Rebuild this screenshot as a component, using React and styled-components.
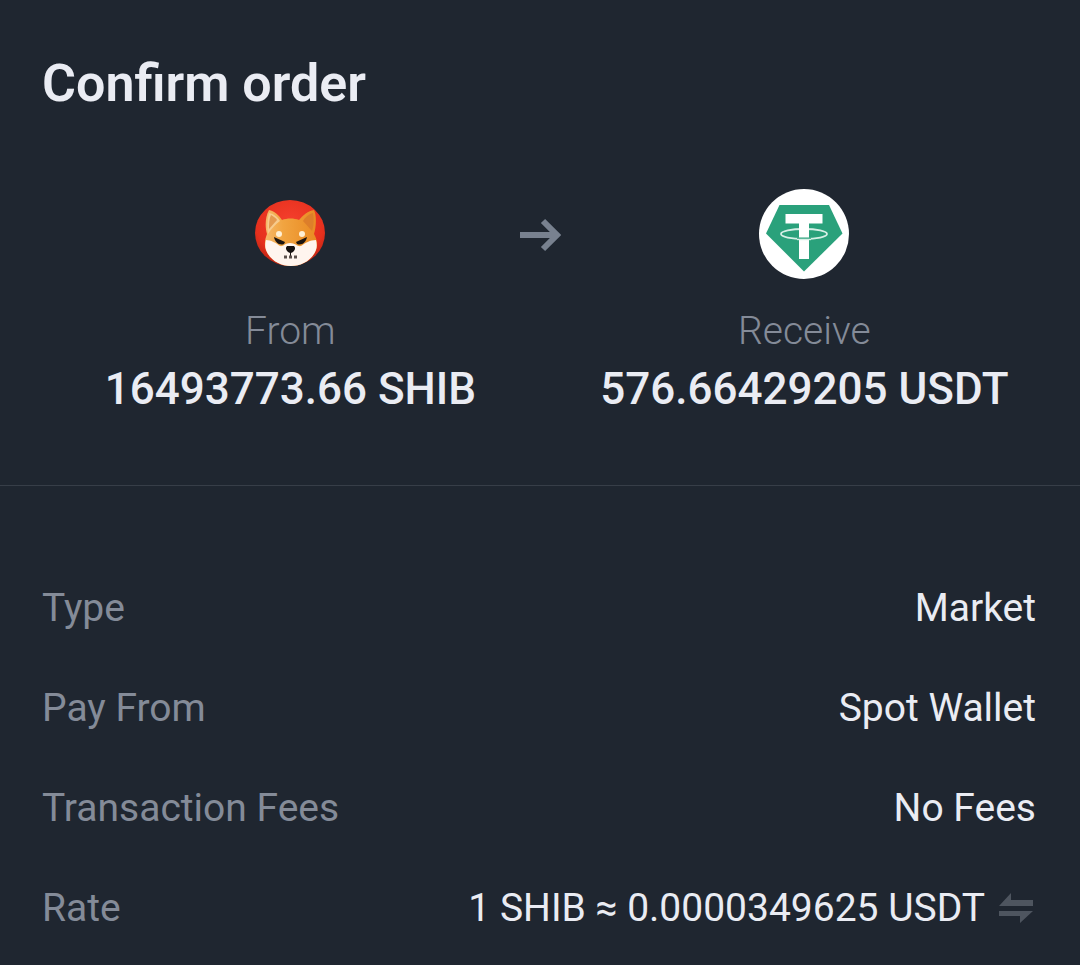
import styled, { ThemeProvider, createGlobalStyle } from 'styled-components';

const theme = {
	colors: {
		background: '#1f2630',
		line: '#373e48',
		text: '#eaecf3',
		muted: '#848b98',
		arrow: '#78818f',
		swap: '#4e555f',
	},
	fontSize: {
		medium: '39px',
		large: '44px',
		xlarge: '52px',
	},
}

const GlobalStyle = createGlobalStyle`
	* {
		box-sizing: border-box;
	}

	body {
		background: ${ props => props.theme.colors.background };
		color: ${ props => props.theme.colors.text };
		font-family: Roboto, 'Open Sans', sans-serif;
		margin: 0;
	}
`

const Title = styled.h1`
	font-size: ${ props => props.theme.fontSize.xlarge };
	font-weight: 600;
	line-height: 64px;
	margin: 0;
	padding: 52px 42px 0;
`

const Summary = styled.section`
	border-bottom: 1px solid ${ props => props.theme.colors.line };
	display: grid;
	grid-template-columns: 15fr 42px 16fr;
	padding: 68px 32px 66px 62px;
`

const Coin = styled.div`
	align-items: center;
	display: flex;
	flex-direction: column;
	white-space: nowrap;
`

const CoinIcon = styled.div`
	align-items: center;
	display: flex;
	height: 100px;
	justify-content: center;

	svg {
		display: block;
	}
`

const CoinLabel = styled.span`
	color: ${ props => props.theme.colors.muted };
	font-size: ${ props => props.theme.fontSize.medium };
	font-weight: 300;
	line-height: 56px;
	margin-top: 19px;
`

const CoinAmount = styled.strong`
	font-size: ${ props => props.theme.fontSize.large };
	font-weight: 500;
	line-height: 60px;
`

const ArrowCell = styled.div`
	align-items: center;
	display: flex;
	height: 100px;
	justify-content: center;
`

const Details = styled.dl`
	margin: 0;
	padding: 72px 44px 0 42px;
`

const Row = styled.div`
	align-items: center;
	display: flex;
	font-size: ${ props => props.theme.fontSize.medium };
	height: 100px;
	justify-content: space-between;
	white-space: nowrap;
`

const RowLabel = styled.dt`
	color: ${ props => props.theme.colors.muted };
`

const RowValue = styled.dd`
	align-items: center;
	display: flex;
	gap: 14px;
	margin: 0;
`

const SwapButton = styled.button`
	background: none;
	border: none;
	color: ${ props => props.theme.colors.swap };
	cursor: pointer;
	display: flex;
	margin: 0;
	padding: 0;
`

const ShibIcon = () => (
	<svg width="72" height="72" viewBox="0 0 72 72" aria-hidden="true">
		<defs>
			<radialGradient id="shibDisc" cx="50%" cy="35%" r="65%">
				<stop offset="0" stopColor="#f5402e" />
				<stop offset="0.75" stopColor="#e6301d" />
				<stop offset="1" stopColor="#bf2413" />
			</radialGradient>
			<linearGradient id="shibFur" x1="0" y1="0" x2="1" y2="0">
				<stop offset="0" stopColor="#f6b96a" />
				<stop offset="0.35" stopColor="#f1a440" />
				<stop offset="1" stopColor="#e98a22" />
			</linearGradient>
		</defs>
		<ellipse cx="36" cy="35" rx="35" ry="33" fill="url(#shibDisc)" />
		<path d="M15 12c5 1 10 5 13 10 5-2 12-2 17 0 4-5 9-9 15-10 3 6 2 18 0 24 3 5 4 11 2 16-4 10-14 16-25 16S16 62 12 52c-2-5-1-11 1-16-2-6-2-17 2-24z" fill="url(#shibFur)" />
		<path d="M15 15c-2 7-2 15-1 21 3-5 8-10 12-13-2-4-6-7-11-8z" fill="#f7cb8d" />
		<path d="M17 17c-2 4-2 9-2 14l8-9c-1-2-4-4-6-5z" fill="#e39a50" />
		<path d="M59 15c-4 1-8 4-10 8l9 10c2-5 2-12 1-18z" fill="#dd7e2a" />
		<path d="M12 42c5 0 10 3 14 6 3 1 5-3 10-3s8 4 11 3c4-3 9-6 15-6 1 4 1 7 0 10-4 10-14 16-25 16S16 62 12 52c-1-3-1-6 0-10z" fill="#fff5ee" />
		<ellipse cx="25" cy="36" rx="3" ry="3" fill="#fff0d4" />
		<ellipse cx="48" cy="36" rx="3" ry="3" fill="#fff0d4" />
		<path d="M20 39l11 5-1 2c-5 2-9-2-10-7z" fill="#1c1510" />
		<path d="M53 39l-11 5 1 2c5 2 9-2 10-7z" fill="#1c1510" />
		<path d="M33 48h7c2 2 1 4-1 6l-2 1v3h-1v-3l-2-1c-2-2-3-4-1-6z" fill="#171210" />
		<path d="M30 59h13" fill="none" stroke="#5c504b" strokeWidth="3" strokeDasharray="3 2" />
	</svg>
)

const TetherIcon = () => (
	<svg width="90" height="90" viewBox="0 0 90 90" aria-hidden="true">
		<circle cx="45" cy="45" r="45" fill="#fff" />
		<path d="M20.500 16H70l13.500 28.500-38.500 38-38-38z" fill="#2aa17b" />
		<ellipse cx="45" cy="45" rx="23" ry="5" fill="none" stroke="#d6efe6" strokeWidth="1.800" />
		<path d="M26.500 25h37v9.500H50V70H40V34.500H26.500z" fill="#fff" />
		<path d="M38 49.200h14" stroke="#2aa17b" strokeWidth="1.400" />
		<path d="M38 50.500h14" stroke="#d6efe6" strokeWidth="1.400" />
	</svg>
)

const ArrowIcon = () => (
	<svg width="42" height="36" viewBox="0 0 42 36" aria-hidden="true">
		<path d="M1 19h36M24 5l14 14-14 14" fill="none" stroke={theme.colors.arrow} strokeWidth="6" />
	</svg>
)

const SwapIcon = () => (
	<svg width="37" height="32" viewBox="0 0 37 32" aria-hidden="true">
		<path d="M0 14L12 1v7h22v6zM0 19h34L21 31v-7H0z" fill="currentColor" />
	</svg>
)

const details = [
	{ label: 'Type', value: 'Market' },
	{ label: 'Pay From', value: 'Spot Wallet' },
	{ label: 'Transaction Fees', value: 'No Fees' },
	{ label: 'Rate', value: '1 SHIB ≈ 0.0000349625 USDT', swap: true },
]

const App = () => {
	return (
		<ThemeProvider theme={theme}>
			<GlobalStyle />
			<main>
				<Title>Confirm order</Title>
				<Summary>
					<Coin>
						<CoinIcon><ShibIcon /></CoinIcon>
						<CoinLabel>From</CoinLabel>
						<CoinAmount>16493773.66 SHIB</CoinAmount>
					</Coin>
					<ArrowCell><ArrowIcon /></ArrowCell>
					<Coin>
						<CoinIcon><TetherIcon /></CoinIcon>
						<CoinLabel>Receive</CoinLabel>
						<CoinAmount>576.66429205 USDT</CoinAmount>
					</Coin>
				</Summary>
				<Details>
					{details.map(({ label, value, swap }) => (
						<Row key={label}>
							<RowLabel>{label}</RowLabel>
							<RowValue>
								{value}
								{swap && <SwapButton type="button" aria-label="Swap rate"><SwapIcon /></SwapButton>}
							</RowValue>
						</Row>
					))}
				</Details>
			</main>
		</ThemeProvider>
	)
}

export default App;
